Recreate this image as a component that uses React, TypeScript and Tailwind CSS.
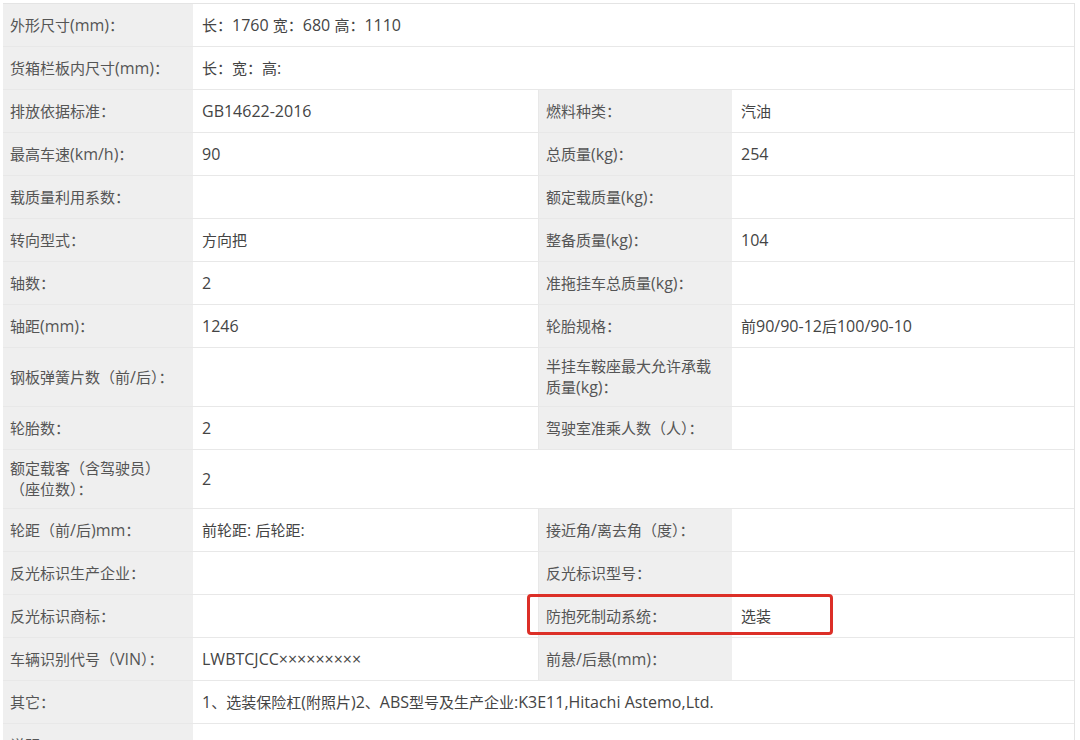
import React from 'react';

type Row = {
  label: React.ReactNode;
  value?: string;
  label2?: string;
  value2?: string;
  span?: boolean;
  highlight?: boolean;
};

// latin runs render a touch larger, like the original page's font
function Txt({ text }: { text?: string }) {
  if (!text) return null;
  const parts = text.split(/([A-Za-z0-9×\-\/.,:() ]+)/).filter(Boolean);
  return (
    <>
      {parts.map((p, i) =>
        /^[A-Za-z0-9×\-\/.,:() ]+$/.test(p) ? (
          <span key={i} className="text-[16px]">
            {p}
          </span>
        ) : (
          <span key={i}>{p}</span>
        )
      )}
    </>
  );
}

const rows: Row[] = [
  { label: '外形尺寸(mm)：', value: '长：1760 宽：680 高：1110', span: true },
  { label: '货箱栏板内尺寸(mm)：', value: '长：宽：高:', span: true },
  { label: '排放依据标准：', value: 'GB14622-2016', label2: '燃料种类：', value2: '汽油' },
  { label: '最高车速(km/h)：', value: '90', label2: '总质量(kg)：', value2: '254' },
  { label: '载质量利用系数：', value: '', label2: '额定载质量(kg)：', value2: '' },
  { label: '转向型式：', value: '方向把', label2: '整备质量(kg)：', value2: '104' },
  { label: '轴数：', value: '2', label2: '准拖挂车总质量(kg)：', value2: '' },
  { label: '轴距(mm)：', value: '1246', label2: '轮胎规格：', value2: '前90/90-12后100/90-10' },
  { label: '钢板弹簧片数（前/后）：', value: '', label2: '半挂车鞍座最大允许承载质量(kg)：', value2: '' },
  { label: '轮胎数：', value: '2', label2: '驾驶室准乘人数（人）：', value2: '' },
  {
    label: (
      <>
        额定载客（含驾驶员）
        <br />
        （座位数）：
      </>
    ),
    value: '2',
    span: true,
  },
  { label: '轮距（前/后)mm：', value: '前轮距: 后轮距:', label2: '接近角/离去角（度）：', value2: '' },
  { label: '反光标识生产企业：', value: '', label2: '反光标识型号：', value2: '' },
  { label: '反光标识商标：', value: '', label2: '防抱死制动系统：', value2: '选装', highlight: true },
  { label: '车辆识别代号（VIN）：', value: 'LWBTCJCC×××××××××', label2: '前悬/后悬(mm)：', value2: '' },
  {
    label: '其它：',
    value: '1、选装保险杠(附照片)2、ABS型号及生产企业:K3E11,Hitachi Astemo,Ltd.',
    span: true,
  },
  { label: '说明：', value: '', span: true },
];

function Label({ text }: { text: React.ReactNode }) {
  return (
    <div className="min-h-[42px] py-2 pl-[7px] pr-[8px] bg-[#efefef] text-[#555] flex items-center">
      <div>{typeof text === 'string' ? <Txt text={text} /> : text}</div>
    </div>
  );
}

function Value({ text }: { text?: string }) {
  return (
    <div className="min-h-[42px] py-2 pl-[9px] pr-2 bg-white text-[#444] flex items-center">
      <div>
        <Txt text={text} />
      </div>
    </div>
  );
}

export default function App() {
  return (
    <div
      className="bg-white min-h-screen pt-[3px] pl-[3px] text-[15px] leading-[21px]"
      style={{ fontFamily: '"Open Sans", "Noto Sans CJK SC", sans-serif' }}
    >
      <div className="w-[1072px] border-t border-r border-[#e4e4e4]">
        {rows.map((r, i) =>
          r.span ? (
            <div key={i} className="grid grid-cols-[190px_1fr] border-b border-[#e8e8e8]">
              <Label text={r.label} />
              <Value text={r.value} />
            </div>
          ) : (
            <div
              key={i}
              className="relative grid grid-cols-[190px_346px_193px_1fr] border-b border-[#e8e8e8]"
            >
              <Label text={r.label} />
              <div className="border-r border-[#e8e8e8] flex">
                <div className="flex-1">
                  <Value text={r.value} />
                </div>
              </div>
              <Label text={r.label2 ?? ''} />
              <Value text={r.value2} />
              {r.highlight && (
                <div className="absolute left-[524px] top-[-1px] w-[306px] h-[41px] border-[3px] border-[#dc2f27] rounded-[4px]" />
              )}
            </div>
          )
        )}
      </div>
    </div>
  );
}
